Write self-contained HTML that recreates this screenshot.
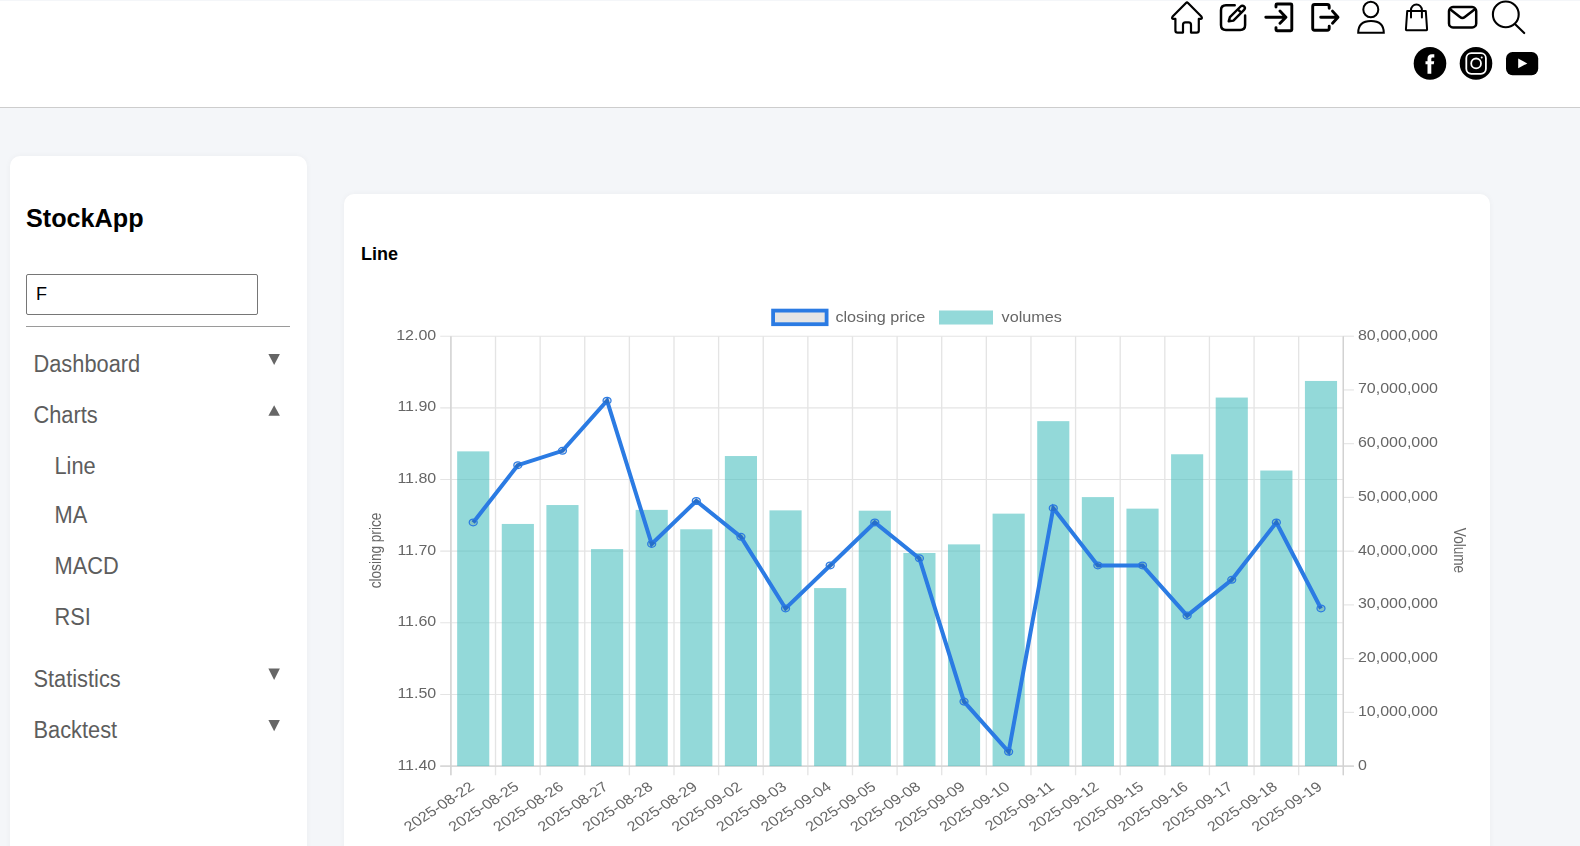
<!DOCTYPE html>
<html><head><meta charset="utf-8">
<style>
*{box-sizing:border-box}
html,body{margin:0;padding:0}
body{width:1580px;height:846px;overflow:hidden;background:#f4f6f9;font-family:"Liberation Sans",sans-serif;position:relative}
.header{position:absolute;left:0;top:1px;width:1580px;height:107px;background:#fff;border-bottom:1px solid #cdcdcd}
.side{position:absolute;left:10px;top:156px;width:297px;height:720px;background:#fff;border-radius:10px;box-shadow:0 0 6px rgba(0,0,0,0.04)}
.card{position:absolute;left:344px;top:194px;width:1146px;height:700px;background:#fff;border-radius:10px;box-shadow:0 0 6px rgba(0,0,0,0.04)}
.brand{position:absolute;left:26px;top:203px;font-weight:bold;font-size:25.2px;color:#000;line-height:30px;margin:0}
.inp{position:absolute;left:26px;top:274px;width:232px;height:41px;border:1px solid #767676;border-radius:2px;background:#fff;font-size:18px;color:#000;padding:0 0 0 9px;line-height:39px}
.hr{position:absolute;left:26px;top:326px;width:264px;height:1px;background:#9a9a9a}
.mi{position:absolute;font-size:21.8px;color:#5d5d5d;line-height:25px;white-space:nowrap;transform:scaleY(1.07);transform-origin:0 20px}
.tri{position:absolute;width:0;height:0;border-left:5.5px solid transparent;border-right:5.5px solid transparent}
.dn{border-top:11px solid #666}
.up{border-bottom:11px solid #666}
.title{position:absolute;left:361px;top:244px;font-weight:bold;font-size:18px;line-height:20px;color:#000}
svg{position:absolute;left:0;top:0}
.tk{font-family:"Liberation Sans",sans-serif;font-size:12px;fill:#666}
.dt{font-size:12.25px}
.lg{font-family:"Liberation Sans",sans-serif;font-size:12.15px;fill:#666}
.at{font-family:"Liberation Sans",sans-serif;font-size:12px;fill:#666}
</style></head><body>
<div class="header"></div>
<svg width="1580" height="110" viewBox="0 0 1580 110"><g fill="none" stroke="#000" stroke-linecap="round" stroke-linejoin="round">
<path stroke-width="2.2" d="M1175.4,18.9 H1173.6 Q1171.2,18.9 1172.6,16.6 L1186,3 Q1187,2 1188,3 L1201.4,16.6 Q1202.8,18.9 1200.4,18.9 H1198.8 V30.4 Q1198.8,32.6 1196.6,32.6 H1191 V24.8 Q1191,22.4 1188.6,22.4 H1185.4 Q1183,22.4 1183,24.8 V32.6 H1177.6 Q1175.4,32.6 1175.4,30.4 Z"/>
<path stroke-width="2.5" d="M1234.7,5.2 H1226 Q1221,5.2 1221,10.2 V24.9 Q1221,29.9 1226,29.9 H1240.1 Q1245.1,29.9 1245.1,24.9 V15.6"/>
<path stroke-width="2.4" d="M1228.7,21.3 L1229.9,17.2 L1240.6,6.5 A2.3,2.3 0 0 1 1244.1,9.9 L1233.4,20.6 Z M1237.8,9.3 L1241.2,12.7"/>
<path stroke-width="2.9" d="M1276,7.1 V5 Q1276,4 1277,4 H1290.8 Q1291.8,4 1291.8,5 V29.8 Q1291.8,30.8 1290.8,30.8 H1277 Q1276,30.8 1276,29.8 V27.6 M1265.8,17.25 H1285.6 M1280,11.1 L1285.9,17.25 L1280,23.3"/>
<path stroke-width="2.9" d="M1329.2,8.3 V6.5 Q1329.2,4.5 1327.2,4.5 H1314.7 Q1312.7,4.5 1312.7,6.5 V28.2 Q1312.7,30.2 1314.7,30.2 H1327.2 Q1329.2,30.2 1329.2,28.2 V26.2 M1320.7,17.25 H1337.6 M1332.5,11.1 L1338,17.25 L1332.5,23.3"/>
<ellipse stroke-width="2" cx="1370.8" cy="9.45" rx="7.5" ry="7.8"/>
<path stroke-width="2" stroke-linejoin="miter" d="M1358.2,32.8 C1358.2,25 1363,20.9 1371,20.9 C1379,20.9 1383.8,25 1383.8,32.8 Z"/>
<path stroke-width="2" d="M1407.2,11.1 H1425.8 L1427.1,29.6 Q1427.1,30.2 1426.5,30.2 H1406.5 Q1405.9,30.2 1405.9,29.6 Z M1411,17.5 V10 A5.45,5.45 0 0 1 1421.9,10 V17.5"/>
<rect stroke-width="2.5" x="1449" y="7.1" width="27.2" height="20.3" rx="4"/>
<path stroke-width="2.5" d="M1450.4,9.4 L1460,17 Q1462.4,18.9 1464.8,17 L1474.5,9.4"/>
<circle stroke-width="2.1" cx="1505.8" cy="14.4" r="12.9"/>
<path stroke-width="2.1" d="M1515.2,24.3 L1524.2,33.1"/>
</g>
<circle cx="1430" cy="63.4" r="16.3" fill="#000"/>
<path fill="#fff" d="M1427.5,73.8 V64.2 H1425.5 V61.3 H1427.5 V58.8 Q1427.5,54.3 1432,54.3 H1434.3 V57.4 H1432.6 Q1431.3,57.4 1431.3,58.7 V61.3 H1434.2 L1433.8,64.2 H1431.3 V73.8 Z"/>
<circle cx="1476" cy="63.4" r="16.3" fill="#000"/>
<rect x="1466.3" y="53.2" width="19.6" height="20.6" rx="5" fill="none" stroke="#fff" stroke-width="1.8"/>
<circle cx="1476.1" cy="63.4" r="4.9" fill="none" stroke="#fff" stroke-width="1.8"/>
<circle cx="1481.7" cy="57.5" r="1" fill="#fff"/>
<rect x="1506" y="52" width="32.2" height="23.2" rx="6.5" fill="#000"/>
<path fill="#fff" d="M1518.2,58.6 L1527.3,63.4 L1518.2,68.3 Z"/>
</svg>
<div class="side"></div>
<div class="card"></div>
<div class="brand">StockApp</div>
<div class="inp">F</div>
<div class="hr"></div>
<div class="mi" style="left:33.5px;top:351.7px">Dashboard</div><svg class="tr" style="left:268px;top:353px" width="13" height="13"><polygon points="0.4,1 11.9,1 6.15,11.9" fill="#666"/></svg>
<div class="mi" style="left:33.5px;top:402.5px">Charts</div><svg class="tr" style="left:268px;top:404px" width="13" height="13"><polygon points="0.4,11.8 11.9,11.8 6.15,1.2" fill="#666"/></svg>
<div class="mi" style="left:54.5px;top:453.5px">Line</div>
<div class="mi" style="left:54.5px;top:503.3px">MA</div>
<div class="mi" style="left:54.5px;top:554.3px">MACD</div>
<div class="mi" style="left:54.5px;top:605px">RSI</div>
<div class="mi" style="left:33.5px;top:666.5px">Statistics</div><svg class="tr" style="left:268px;top:668px" width="13" height="13"><polygon points="0.4,0.6 11.9,0.6 6.15,12" fill="#666"/></svg>
<div class="mi" style="left:33.5px;top:717.5px">Backtest</div><svg class="tr" style="left:268px;top:719px" width="13" height="13"><polygon points="0.4,1 11.9,1 6.15,12.2" fill="#666"/></svg>
<div class="title">Line</div>
<svg width="1580" height="846" viewBox="0 0 1580 846" style="will-change:transform">
<rect x="773.1" y="310.6" width="53.5" height="13.6" fill="rgba(0,0,0,0.1)" stroke="#2b7be3" stroke-width="3.8"/>
<text transform="translate(835.4,321.6) scale(1.3333,1.16)" y="0" class="lg">closing price</text>
<rect x="939" y="310.5" width="54" height="14" fill="rgba(75,192,192,0.6)"/>
<text transform="translate(1001.6,321.6) scale(1.3333,1.16)" y="0" class="lg">volumes</text>
<text transform="translate(375.5,550.5) scale(1.3333,1.1333) rotate(-90)" y="4.16" text-anchor="middle" class="at">closing price</text>
<text transform="translate(1459.5,550.5) scale(1.3333,1.1333) rotate(90)" y="4.16" text-anchor="middle" class="at">Volume</text>
<line x1="440.23" y1="336.20" x2="1343.30" y2="336.20" stroke="#e4e4e4" stroke-width="1.13"/>
<line x1="440.23" y1="407.85" x2="1343.30" y2="407.85" stroke="#e4e4e4" stroke-width="1.13"/>
<line x1="440.23" y1="479.50" x2="1343.30" y2="479.50" stroke="#e4e4e4" stroke-width="1.13"/>
<line x1="440.23" y1="551.15" x2="1343.30" y2="551.15" stroke="#e4e4e4" stroke-width="1.13"/>
<line x1="440.23" y1="622.80" x2="1343.30" y2="622.80" stroke="#e4e4e4" stroke-width="1.13"/>
<line x1="440.23" y1="694.45" x2="1343.30" y2="694.45" stroke="#e4e4e4" stroke-width="1.13"/>
<line x1="440.23" y1="766.10" x2="1343.30" y2="766.10" stroke="#e4e4e4" stroke-width="1.13"/>
<line x1="1343.30" y1="336.20" x2="1353.97" y2="336.20" stroke="#e4e4e4" stroke-width="1.13"/>
<line x1="1343.30" y1="389.94" x2="1353.97" y2="389.94" stroke="#e4e4e4" stroke-width="1.13"/>
<line x1="1343.30" y1="443.68" x2="1353.97" y2="443.68" stroke="#e4e4e4" stroke-width="1.13"/>
<line x1="1343.30" y1="497.41" x2="1353.97" y2="497.41" stroke="#e4e4e4" stroke-width="1.13"/>
<line x1="1343.30" y1="551.15" x2="1353.97" y2="551.15" stroke="#e4e4e4" stroke-width="1.13"/>
<line x1="1343.30" y1="604.89" x2="1353.97" y2="604.89" stroke="#e4e4e4" stroke-width="1.13"/>
<line x1="1343.30" y1="658.62" x2="1353.97" y2="658.62" stroke="#e4e4e4" stroke-width="1.13"/>
<line x1="1343.30" y1="712.36" x2="1353.97" y2="712.36" stroke="#e4e4e4" stroke-width="1.13"/>
<line x1="1343.30" y1="766.10" x2="1353.97" y2="766.10" stroke="#e4e4e4" stroke-width="1.13"/>
<line x1="450.90" y1="336.20" x2="450.90" y2="775.17" stroke="#e4e4e4" stroke-width="1.33"/>
<line x1="495.52" y1="336.20" x2="495.52" y2="775.17" stroke="#e4e4e4" stroke-width="1.33"/>
<line x1="540.14" y1="336.20" x2="540.14" y2="775.17" stroke="#e4e4e4" stroke-width="1.33"/>
<line x1="584.76" y1="336.20" x2="584.76" y2="775.17" stroke="#e4e4e4" stroke-width="1.33"/>
<line x1="629.38" y1="336.20" x2="629.38" y2="775.17" stroke="#e4e4e4" stroke-width="1.33"/>
<line x1="674.00" y1="336.20" x2="674.00" y2="775.17" stroke="#e4e4e4" stroke-width="1.33"/>
<line x1="718.62" y1="336.20" x2="718.62" y2="775.17" stroke="#e4e4e4" stroke-width="1.33"/>
<line x1="763.24" y1="336.20" x2="763.24" y2="775.17" stroke="#e4e4e4" stroke-width="1.33"/>
<line x1="807.86" y1="336.20" x2="807.86" y2="775.17" stroke="#e4e4e4" stroke-width="1.33"/>
<line x1="852.48" y1="336.20" x2="852.48" y2="775.17" stroke="#e4e4e4" stroke-width="1.33"/>
<line x1="897.10" y1="336.20" x2="897.10" y2="775.17" stroke="#e4e4e4" stroke-width="1.33"/>
<line x1="941.72" y1="336.20" x2="941.72" y2="775.17" stroke="#e4e4e4" stroke-width="1.33"/>
<line x1="986.34" y1="336.20" x2="986.34" y2="775.17" stroke="#e4e4e4" stroke-width="1.33"/>
<line x1="1030.96" y1="336.20" x2="1030.96" y2="775.17" stroke="#e4e4e4" stroke-width="1.33"/>
<line x1="1075.58" y1="336.20" x2="1075.58" y2="775.17" stroke="#e4e4e4" stroke-width="1.33"/>
<line x1="1120.20" y1="336.20" x2="1120.20" y2="775.17" stroke="#e4e4e4" stroke-width="1.33"/>
<line x1="1164.82" y1="336.20" x2="1164.82" y2="775.17" stroke="#e4e4e4" stroke-width="1.33"/>
<line x1="1209.44" y1="336.20" x2="1209.44" y2="775.17" stroke="#e4e4e4" stroke-width="1.33"/>
<line x1="1254.06" y1="336.20" x2="1254.06" y2="775.17" stroke="#e4e4e4" stroke-width="1.33"/>
<line x1="1298.68" y1="336.20" x2="1298.68" y2="775.17" stroke="#e4e4e4" stroke-width="1.33"/>
<line x1="1343.30" y1="336.20" x2="1343.30" y2="775.17" stroke="#e4e4e4" stroke-width="1.33"/>
<line x1="450.90" y1="336.20" x2="450.90" y2="775.17" stroke="#d2d2d2" stroke-width="1.33"/>
<line x1="1343.30" y1="336.20" x2="1343.30" y2="775.17" stroke="#d2d2d2" stroke-width="1.33"/>
<line x1="440.23" y1="766.10" x2="1353.97" y2="766.10" stroke="#d2d2d2" stroke-width="1.13"/>
<rect x="457.15" y="451.36" width="32.13" height="314.74" fill="rgba(75,192,192,0.6)"/>
<rect x="501.77" y="523.96" width="32.13" height="242.14" fill="rgba(75,192,192,0.6)"/>
<rect x="546.39" y="505.04" width="32.13" height="261.06" fill="rgba(75,192,192,0.6)"/>
<rect x="591.01" y="549.05" width="32.13" height="217.05" fill="rgba(75,192,192,0.6)"/>
<rect x="635.63" y="509.88" width="32.13" height="256.22" fill="rgba(75,192,192,0.6)"/>
<rect x="680.25" y="529.28" width="32.13" height="236.82" fill="rgba(75,192,192,0.6)"/>
<rect x="724.87" y="456.03" width="32.13" height="310.07" fill="rgba(75,192,192,0.6)"/>
<rect x="769.49" y="510.36" width="32.13" height="255.74" fill="rgba(75,192,192,0.6)"/>
<rect x="814.11" y="588.07" width="32.13" height="178.03" fill="rgba(75,192,192,0.6)"/>
<rect x="858.73" y="510.69" width="32.13" height="255.41" fill="rgba(75,192,192,0.6)"/>
<rect x="903.35" y="552.98" width="32.13" height="213.12" fill="rgba(75,192,192,0.6)"/>
<rect x="947.97" y="544.38" width="32.13" height="221.72" fill="rgba(75,192,192,0.6)"/>
<rect x="992.59" y="513.64" width="32.13" height="252.46" fill="rgba(75,192,192,0.6)"/>
<rect x="1037.21" y="421.16" width="32.13" height="344.94" fill="rgba(75,192,192,0.6)"/>
<rect x="1081.83" y="497.09" width="32.13" height="269.01" fill="rgba(75,192,192,0.6)"/>
<rect x="1126.45" y="508.64" width="32.13" height="257.46" fill="rgba(75,192,192,0.6)"/>
<rect x="1171.07" y="454.26" width="32.13" height="311.84" fill="rgba(75,192,192,0.6)"/>
<rect x="1215.69" y="397.57" width="32.13" height="368.53" fill="rgba(75,192,192,0.6)"/>
<rect x="1260.31" y="470.54" width="32.13" height="295.56" fill="rgba(75,192,192,0.6)"/>
<rect x="1304.93" y="380.96" width="32.13" height="385.14" fill="rgba(75,192,192,0.6)"/>
<polyline points="473.21,522.49 517.83,465.17 562.45,450.84 607.07,400.69 651.69,543.98 696.31,501.00 740.93,536.82 785.55,608.47 830.17,565.48 874.79,522.49 919.41,558.32 964.03,701.62 1008.65,751.77 1053.27,508.16 1097.89,565.48 1142.51,565.48 1187.13,615.64 1231.75,579.81 1276.37,522.49 1320.99,608.47" fill="none" stroke="#2b7be3" stroke-width="4" stroke-linejoin="miter" stroke-miterlimit="10"/>
<ellipse cx="473.21" cy="522.49" rx="4.00" ry="3.40" fill="rgba(0,0,0,0.1)" stroke="#2b7be3" stroke-width="1.25"/>
<ellipse cx="517.83" cy="465.17" rx="4.00" ry="3.40" fill="rgba(0,0,0,0.1)" stroke="#2b7be3" stroke-width="1.25"/>
<ellipse cx="562.45" cy="450.84" rx="4.00" ry="3.40" fill="rgba(0,0,0,0.1)" stroke="#2b7be3" stroke-width="1.25"/>
<ellipse cx="607.07" cy="400.69" rx="4.00" ry="3.40" fill="rgba(0,0,0,0.1)" stroke="#2b7be3" stroke-width="1.25"/>
<ellipse cx="651.69" cy="543.98" rx="4.00" ry="3.40" fill="rgba(0,0,0,0.1)" stroke="#2b7be3" stroke-width="1.25"/>
<ellipse cx="696.31" cy="501.00" rx="4.00" ry="3.40" fill="rgba(0,0,0,0.1)" stroke="#2b7be3" stroke-width="1.25"/>
<ellipse cx="740.93" cy="536.82" rx="4.00" ry="3.40" fill="rgba(0,0,0,0.1)" stroke="#2b7be3" stroke-width="1.25"/>
<ellipse cx="785.55" cy="608.47" rx="4.00" ry="3.40" fill="rgba(0,0,0,0.1)" stroke="#2b7be3" stroke-width="1.25"/>
<ellipse cx="830.17" cy="565.48" rx="4.00" ry="3.40" fill="rgba(0,0,0,0.1)" stroke="#2b7be3" stroke-width="1.25"/>
<ellipse cx="874.79" cy="522.49" rx="4.00" ry="3.40" fill="rgba(0,0,0,0.1)" stroke="#2b7be3" stroke-width="1.25"/>
<ellipse cx="919.41" cy="558.32" rx="4.00" ry="3.40" fill="rgba(0,0,0,0.1)" stroke="#2b7be3" stroke-width="1.25"/>
<ellipse cx="964.03" cy="701.62" rx="4.00" ry="3.40" fill="rgba(0,0,0,0.1)" stroke="#2b7be3" stroke-width="1.25"/>
<ellipse cx="1008.65" cy="751.77" rx="4.00" ry="3.40" fill="rgba(0,0,0,0.1)" stroke="#2b7be3" stroke-width="1.25"/>
<ellipse cx="1053.27" cy="508.16" rx="4.00" ry="3.40" fill="rgba(0,0,0,0.1)" stroke="#2b7be3" stroke-width="1.25"/>
<ellipse cx="1097.89" cy="565.48" rx="4.00" ry="3.40" fill="rgba(0,0,0,0.1)" stroke="#2b7be3" stroke-width="1.25"/>
<ellipse cx="1142.51" cy="565.48" rx="4.00" ry="3.40" fill="rgba(0,0,0,0.1)" stroke="#2b7be3" stroke-width="1.25"/>
<ellipse cx="1187.13" cy="615.64" rx="4.00" ry="3.40" fill="rgba(0,0,0,0.1)" stroke="#2b7be3" stroke-width="1.25"/>
<ellipse cx="1231.75" cy="579.81" rx="4.00" ry="3.40" fill="rgba(0,0,0,0.1)" stroke="#2b7be3" stroke-width="1.25"/>
<ellipse cx="1276.37" cy="522.49" rx="4.00" ry="3.40" fill="rgba(0,0,0,0.1)" stroke="#2b7be3" stroke-width="1.25"/>
<ellipse cx="1320.99" cy="608.47" rx="4.00" ry="3.40" fill="rgba(0,0,0,0.1)" stroke="#2b7be3" stroke-width="1.25"/>
<text transform="translate(436.23,339.70) scale(1.3333,1.19)" y="0" text-anchor="end" class="tk">12.00</text>
<text transform="translate(436.23,411.35) scale(1.3333,1.19)" y="0" text-anchor="end" class="tk">11.90</text>
<text transform="translate(436.23,483.00) scale(1.3333,1.19)" y="0" text-anchor="end" class="tk">11.80</text>
<text transform="translate(436.23,554.65) scale(1.3333,1.19)" y="0" text-anchor="end" class="tk">11.70</text>
<text transform="translate(436.23,626.30) scale(1.3333,1.19)" y="0" text-anchor="end" class="tk">11.60</text>
<text transform="translate(436.23,697.95) scale(1.3333,1.19)" y="0" text-anchor="end" class="tk">11.50</text>
<text transform="translate(436.23,769.60) scale(1.3333,1.19)" y="0" text-anchor="end" class="tk">11.40</text>
<text transform="translate(1357.97,339.70) scale(1.3333,1.19)" y="0" class="tk">80,000,000</text>
<text transform="translate(1357.97,393.44) scale(1.3333,1.19)" y="0" class="tk">70,000,000</text>
<text transform="translate(1357.97,447.18) scale(1.3333,1.19)" y="0" class="tk">60,000,000</text>
<text transform="translate(1357.97,500.91) scale(1.3333,1.19)" y="0" class="tk">50,000,000</text>
<text transform="translate(1357.97,554.65) scale(1.3333,1.19)" y="0" class="tk">40,000,000</text>
<text transform="translate(1357.97,608.39) scale(1.3333,1.19)" y="0" class="tk">30,000,000</text>
<text transform="translate(1357.97,662.12) scale(1.3333,1.19)" y="0" class="tk">20,000,000</text>
<text transform="translate(1357.97,715.86) scale(1.3333,1.19)" y="0" class="tk">10,000,000</text>
<text transform="translate(1357.97,769.60) scale(1.3333,1.19)" y="0" class="tk">0</text>
<text transform="translate(466.16,778.47) scale(1.3333,1.1333) rotate(-37.55)" y="11.36" text-anchor="end" class="tk dt">2025-08-22</text>
<text transform="translate(510.78,778.47) scale(1.3333,1.1333) rotate(-37.55)" y="11.36" text-anchor="end" class="tk dt">2025-08-25</text>
<text transform="translate(555.40,778.47) scale(1.3333,1.1333) rotate(-37.55)" y="11.36" text-anchor="end" class="tk dt">2025-08-26</text>
<text transform="translate(600.02,778.47) scale(1.3333,1.1333) rotate(-37.55)" y="11.36" text-anchor="end" class="tk dt">2025-08-27</text>
<text transform="translate(644.64,778.47) scale(1.3333,1.1333) rotate(-37.55)" y="11.36" text-anchor="end" class="tk dt">2025-08-28</text>
<text transform="translate(689.26,778.47) scale(1.3333,1.1333) rotate(-37.55)" y="11.36" text-anchor="end" class="tk dt">2025-08-29</text>
<text transform="translate(733.88,778.47) scale(1.3333,1.1333) rotate(-37.55)" y="11.36" text-anchor="end" class="tk dt">2025-09-02</text>
<text transform="translate(778.50,778.47) scale(1.3333,1.1333) rotate(-37.55)" y="11.36" text-anchor="end" class="tk dt">2025-09-03</text>
<text transform="translate(823.12,778.47) scale(1.3333,1.1333) rotate(-37.55)" y="11.36" text-anchor="end" class="tk dt">2025-09-04</text>
<text transform="translate(867.74,778.47) scale(1.3333,1.1333) rotate(-37.55)" y="11.36" text-anchor="end" class="tk dt">2025-09-05</text>
<text transform="translate(912.36,778.47) scale(1.3333,1.1333) rotate(-37.55)" y="11.36" text-anchor="end" class="tk dt">2025-09-08</text>
<text transform="translate(956.98,778.47) scale(1.3333,1.1333) rotate(-37.55)" y="11.36" text-anchor="end" class="tk dt">2025-09-09</text>
<text transform="translate(1001.60,778.47) scale(1.3333,1.1333) rotate(-37.55)" y="11.36" text-anchor="end" class="tk dt">2025-09-10</text>
<text transform="translate(1046.22,778.47) scale(1.3333,1.1333) rotate(-37.55)" y="11.36" text-anchor="end" class="tk dt">2025-09-11</text>
<text transform="translate(1090.84,778.47) scale(1.3333,1.1333) rotate(-37.55)" y="11.36" text-anchor="end" class="tk dt">2025-09-12</text>
<text transform="translate(1135.46,778.47) scale(1.3333,1.1333) rotate(-37.55)" y="11.36" text-anchor="end" class="tk dt">2025-09-15</text>
<text transform="translate(1180.08,778.47) scale(1.3333,1.1333) rotate(-37.55)" y="11.36" text-anchor="end" class="tk dt">2025-09-16</text>
<text transform="translate(1224.70,778.47) scale(1.3333,1.1333) rotate(-37.55)" y="11.36" text-anchor="end" class="tk dt">2025-09-17</text>
<text transform="translate(1269.32,778.47) scale(1.3333,1.1333) rotate(-37.55)" y="11.36" text-anchor="end" class="tk dt">2025-09-18</text>
<text transform="translate(1313.94,778.47) scale(1.3333,1.1333) rotate(-37.55)" y="11.36" text-anchor="end" class="tk dt">2025-09-19</text>
</svg>
</body></html>
